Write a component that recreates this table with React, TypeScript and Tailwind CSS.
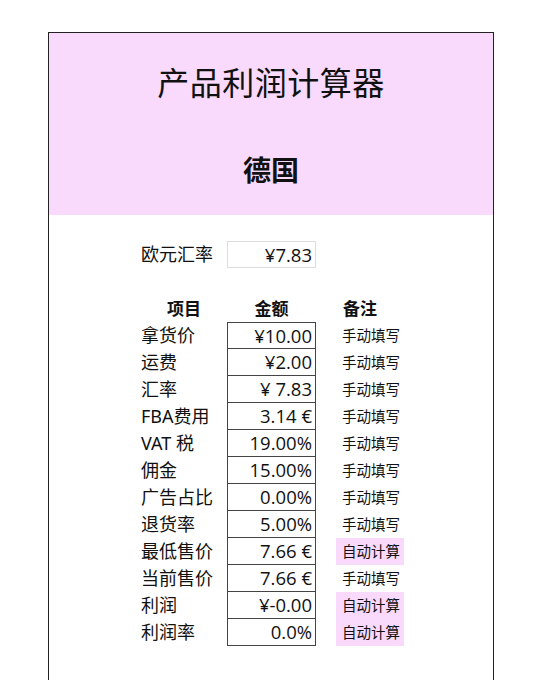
import React from "react";

type Row = { label: string; value: string; note: string; auto?: boolean };

const ROWS: Row[] = [
  { label: "拿货价", value: "¥10.00", note: "手动填写" },
  { label: "运费", value: "¥2.00", note: "手动填写" },
  { label: "汇率", value: "¥ 7.83", note: "手动填写" },
  { label: "FBA费用", value: "3.14 €", note: "手动填写" },
  { label: "VAT 税", value: "19.00%", note: "手动填写" },
  { label: "佣金", value: "15.00%", note: "手动填写" },
  { label: "广告占比", value: "0.00%", note: "手动填写" },
  { label: "退货率", value: "5.00%", note: "手动填写" },
  { label: "最低售价", value: "7.66 €", note: "自动计算", auto: true },
  { label: "当前售价", value: "7.66 €", note: "手动填写" },
  { label: "利润", value: "¥-0.00", note: "自动计算", auto: true },
  { label: "利润率", value: "0.0%", note: "自动计算", auto: true },
];

const NUM_FONT = { fontFamily: '"Open Sans", "Noto Sans CJK SC", sans-serif' };

export default function App() {
  return (
    <div
      className="w-[540px] h-[680px] overflow-hidden bg-white pt-[32px] pl-[48px] text-[#111]"
      style={{ fontFamily: '"Noto Sans", "Noto Sans CJK SC", sans-serif' }}
    >
      <div className="w-[446px] h-[700px] border border-[#222] border-b-0">
        <div className="h-[182px] bg-[#f9dafc] flex flex-col items-center">
          <div className="mt-[28px] text-[32px] leading-[44px] tracking-[0.5px]">产品利润计算器</div>
          <div className="mt-[47px] text-[28px] leading-[36px] font-bold">德国</div>
        </div>

        <div className="pl-[92px] pt-[26px]">
          <div className="flex items-center h-[27px]">
            <div className="w-[86px] text-[18px]">欧元汇率</div>
            <div
              className="w-[89px] h-[27px] border border-[#ddd] flex items-center justify-end pr-[3px] text-[18.5px]"
              style={NUM_FONT}
            >
              ¥7.83
            </div>
          </div>

          <div className="flex items-center h-[27px] mt-[27px] font-bold text-[17px]">
            <div className="w-[86px] text-center">项目</div>
            <div className="w-[89px] text-center">金额</div>
            <div className="ml-[27px]">备注</div>
          </div>

          <div className="flex flex-col">
            {ROWS.map((r, i) => (
              <div key={r.label} className="flex items-center h-[27px]">
                <div className="w-[86px] text-[18px] leading-[27px]">{r.label}</div>
                <div
                  className={`w-[89px] h-[27px] border-x border-b border-[#444] ${i === 0 ? "border-t" : ""} flex items-center justify-end pr-[3px] text-[18.5px]`}
                  style={NUM_FONT}
                >
                  {r.value}
                </div>
                <div
                  className={`ml-[20px] w-[68px] h-[27px] flex items-center pl-[6px] text-[14.5px] ${r.auto ? "bg-[#f9dafc]" : ""}`}
                >
                  {r.note}
                </div>
              </div>
            ))}
          </div>
        </div>
      </div>
    </div>
  );
}
